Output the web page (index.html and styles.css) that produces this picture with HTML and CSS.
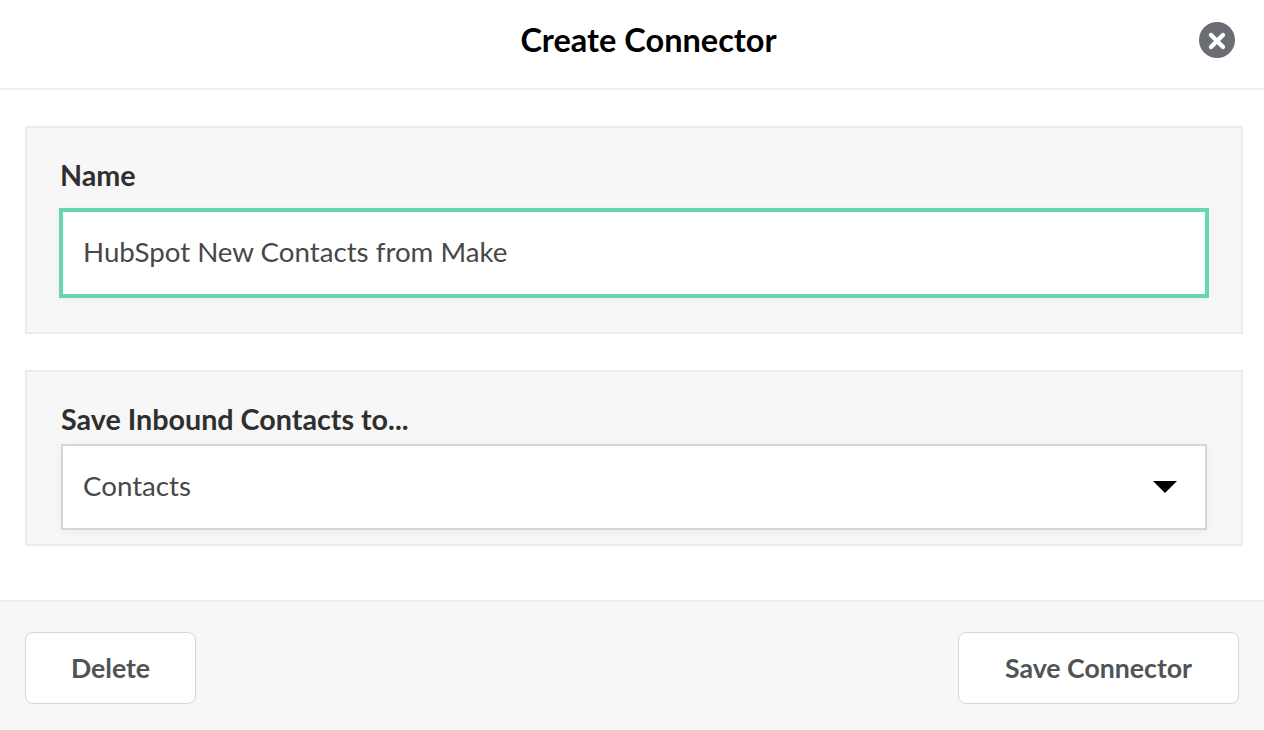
FILE: index.html
```html
<!DOCTYPE html>
<html lang="en">
<head>
    <meta charset="UTF-8">
    <title>Create Connector</title>
    <link rel="stylesheet" href="styles.css">
</head>
<body>
    <div class="modal">
        <div class="header">
            <h1 class="title">Create Connector</h1>
            <div class="close">
                <svg width="36" height="36" viewBox="0 0 36 36">
                    <circle cx="18" cy="18" r="18" fill="#6a6e73"/>
                    <path d="M12 13L24 25M24 13L12 25" stroke="#fff" stroke-width="4.4" stroke-linecap="round"/>
                </svg>
            </div>
        </div>
        <div class="content">
            <div class="section section-name">
                <div class="label">Name</div>
                <div class="input">HubSpot New Contacts from Make</div>
            </div>
            <div class="section section-save">
                <div class="label">Save Inbound Contacts to...</div>
                <div class="select">
                    <span class="select-text">Contacts</span>
                    <div class="arrow"></div>
                </div>
            </div>
        </div>
        <div class="footer">
            <div class="btn btn-delete">Delete</div>
            <div class="btn btn-save">Save Connector</div>
        </div>
    </div>
</body>
</html>
```

FILE: styles.css
```css
*{
    box-sizing: border-box;
}
body{
    margin: 0;
    background-color: #fff;
    font-family: "Lato", "Liberation Sans", sans-serif;
}
.modal{
    height: 730px;
    display: flex;
    flex-direction: column;
}
.header{
    height: 90px;
    flex: none;
    border-bottom: 2px solid #eee;
    display: flex;
    align-items: center;
    justify-content: center;
    position: relative;
}
.title{
    margin: 0 0 9px 33px;
    font-size: 32.5px;
    font-weight: 700;
    color: #000;
}
.close{
    position: absolute;
    left: 1199px;
    top: 22px;
    width: 36px;
    height: 36px;
}
.content{
    flex: 1;
    padding: 36px 21px 0 25px;
}
.section{
    background-color: #f7f7f7;
    border: 2px solid #ebebeb;
}
.section-name{
    height: 208px;
    padding: 31px 32px 0;
    margin-bottom: 36px;
}
.section-save{
    height: 176px;
    padding: 31px 34px 0;
}
.label{
    font-size: 28.7px;
    font-weight: 700;
    line-height: 32px;
    color: #2f2f2f;
}
.section-name .label{
    height: 49px;
    margin-left: 1px;
}
.section-save .label{
    height: 41px;
}
.input{
    height: 90px;
    border: 4px solid #66d7ae;
    background-color: #fff;
    padding: 0 0 4px 20px;
    display: flex;
    align-items: center;
    font-size: 27.7px;
    color: #484848;
    box-shadow: 0 2px 10px rgba(0, 0, 0, 0.04);
}
.select{
    height: 86px;
    border: 2px solid #d6d6d6;
    background-color: #fff;
    padding: 0 28px 0 20px;
    display: flex;
    align-items: center;
    justify-content: space-between;
    font-size: 27.7px;
    color: #484848;
    box-shadow: 0 2px 10px rgba(0, 0, 0, 0.05);
}
.select-text{
    margin-bottom: 4px;
}
.arrow{
    width: 0;
    height: 0;
    border-left: 12px solid transparent;
    border-right: 12px solid transparent;
    border-top: 12px solid #000;
}
.footer{
    height: 130px;
    flex: none;
    background-color: #f7f7f7;
    border-top: 2px solid #ebebeb;
    padding: 30px 25px 0;
    display: flex;
    justify-content: space-between;
    align-items: flex-start;
}
.btn{
    height: 72px;
    background-color: #fff;
    border: 1px solid #d6d6d6;
    border-radius: 8px;
    display: flex;
    align-items: center;
    justify-content: center;
    font-size: 26.7px;
    font-weight: 700;
    color: #4f5456;
}
.btn-delete{
    width: 171px;
}
.btn-save{
    width: 281px;
}
```
